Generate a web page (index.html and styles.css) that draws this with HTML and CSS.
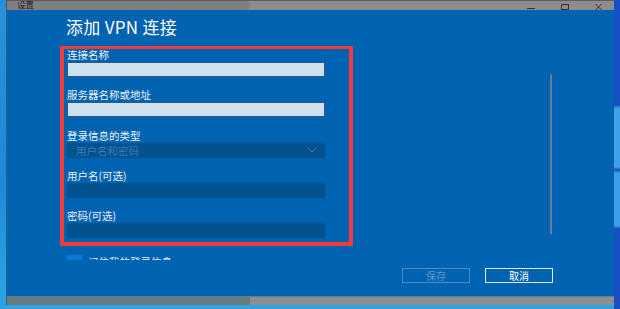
FILE: index.html
```html
<!DOCTYPE html>
<html lang="zh-CN">
<head>
<meta charset="utf-8">
<title>设置</title>
<link rel="stylesheet" href="styles.css">
</head>
<body>
<div class="desktop">
  <div class="window">
    <div class="titlebar">
      <span class="app-name">设置</span>
      <div class="controls">
        <svg class="ctl" width="10" height="10" viewBox="0 0 10 10"><path d="M1 8.5h8" stroke="#333" stroke-width="1"/></svg>
        <svg class="ctl" width="10" height="10" viewBox="0 0 10 10"><rect x="1.5" y="4.5" width="7" height="5" fill="none" stroke="#333" stroke-width="1"/></svg>
        <svg class="ctl" width="10" height="10" viewBox="0 0 10 10"><path d="M1.5 4l6 6M7.5 4l-6 6" stroke="#333" stroke-width="1"/></svg>
      </div>
    </div>
    <div class="content">
      <div class="scroll">
        <h1 class="title">添加 VPN 连接</h1>
        <div class="highlight">
          <div class="field">
            <label class="label">连接名称</label>
            <div class="input light"></div>
          </div>
          <div class="field">
            <label class="label">服务器名称或地址</label>
            <div class="input light"></div>
          </div>
          <div class="field">
            <label class="label">登录信息的类型</label>
            <div class="input dark select">
              <span class="select-text">用户名和密码</span>
              <svg class="chev" width="10" height="6" viewBox="0 0 10 6"><path d="M1 1l4 4 4-4" fill="none" stroke="#4a84ba" stroke-width="1"/></svg>
            </div>
          </div>
          <div class="field">
            <label class="label">用户名(可选)</label>
            <div class="input dark"></div>
          </div>
          <div class="field">
            <label class="label">密码(可选)</label>
            <div class="input dark"></div>
          </div>
        </div>
        <div class="check-row">
          <span class="checkbox"></span>
          <span class="check-text">记住我的登录信息</span>
        </div>
      </div>
      <div class="scrollbar"></div>
      <div class="footer">
        <button class="btn disabled">保存</button>
        <button class="btn">取消</button>
      </div>
    </div>
    <div class="statusbar"><div class="status-left"></div></div>
  </div>
  <div class="side-right"></div>
</div>
</body>
</html>
```

FILE: styles.css
```css
* { box-sizing: border-box; margin: 0; padding: 0; }
html, body { width: 620px; height: 309px; overflow: hidden; }
body {
  background: #2ea4e4;
  font-family: "Noto Sans CJK SC", "Noto Sans", sans-serif;
}
.desktop {
  display: flex;
  height: 309px;
  background: linear-gradient(180deg, #2b8fd8 0%, #1d8ad6 60%, #2ea4e4 100%);
}
.window {
  margin-left: 6px;
  width: 608px;
  height: 305px;
  display: flex;
  flex-direction: column;
  border-left: 1px solid #2f5f86;
}
.side-right {
  width: 6px;
  height: 309px;
  background: linear-gradient(180deg, #1650c4 0%, #1650c4 34%, #3da2ea 35%, #3da2ea 54%, #1450c0 55%, #3a9fe8 56%, #3a9fe8 73%, #1650c4 74%, #1650c4 100%);
}
.titlebar {
  height: 10px;
  flex: none;
  position: relative;
  background: linear-gradient(90deg, #7f7f7f 0, #7f7f7f 242px, #8c8c8c 243px, #8c8c8c 100%);
  border-top: 1px solid #5d5d5d;
  overflow: hidden;
}
.app-name {
  position: absolute;
  left: 10px;
  top: -3px;
  font-size: 8.5px;
  line-height: 12px;
  color: #1e1e1e;
}
.controls {
  position: absolute;
  right: 10px;
  top: -1px;
  display: flex;
  gap: 24px;
}
.ctl { display: block; }
.content {
  flex: 1;
  background: #0063b1;
  display: flex;
  flex-direction: column;
  position: relative;
}
.scroll {
  height: 250px;
  overflow: hidden;
  padding-left: 53px;
  padding-top: 5px;
}
.title {
  font-size: 17px;
  font-weight: 400;
  line-height: 24px;
  color: #ffffff;
  padding-left: 6px;
  letter-spacing: 0.3px;
}
.highlight {
  margin-top: 7px;
  width: 293px;
  border: 4px solid #f03c3c;
  border-top-width: 3px;
  padding: 0 0 4px 3px;
  display: flex;
  flex-direction: column;
  gap: 12.3px;
}
.field { display: flex; flex-direction: column; }
.label {
  font-size: 10.5px;
  line-height: 12px;
  height: 12px;
  color: #eef4fa;
  margin-bottom: 1px;
  white-space: nowrap;
}
.input {
  width: 258px;
  height: 15px;
}
.input.light {
  background: #cfe1ef;
  border: 1px solid #2b5c8a;
}
.input.dark {
  background: #00538f;
}
.select {
  display: flex;
  align-items: center;
  justify-content: space-between;
  padding: 0 8px 0 9px;
}
.select-text {
  font-size: 10.5px;
  line-height: 15px;
  color: #3d7ab3;
}
.chev { display: block; }
.check-row {
  margin-top: 9px;
  margin-left: 7px;
  display: flex;
  align-items: flex-start;
  gap: 6px;
}
.checkbox {
  width: 15px;
  height: 15px;
  background: #0a7ad8;
  flex: none;
}
.check-text {
  font-size: 10.5px;
  line-height: 12px;
  color: #e8f0f8;
  margin-top: 1px;
}
.scrollbar {
  position: absolute;
  left: 543px;
  top: 64px;
  width: 2px;
  height: 160px;
  background: #6c7f90;
}
.footer {
  flex: 1;
  display: flex;
  justify-content: flex-end;
  align-items: flex-start;
  gap: 15px;
  padding-top: 8px;
  padding-right: 61px;
}
.btn {
  width: 68px;
  height: 15px;
  background: transparent;
  border: 1px solid #e2ebf4;
  color: #ffffff;
  font-family: "Noto Sans CJK SC", "Noto Sans", sans-serif;
  font-size: 10px;
  line-height: 13px;
  text-align: center;
}
.btn.disabled {
  border-color: #4d8bc4;
  color: #5f96c9;
}
.statusbar {
  height: 9px;
  flex: none;
  background: #8d8d8d;
  border-top: 1px solid #5f7f95;
}
.status-left {
  width: 243px;
  height: 100%;
  background: #677b80;
}
```
